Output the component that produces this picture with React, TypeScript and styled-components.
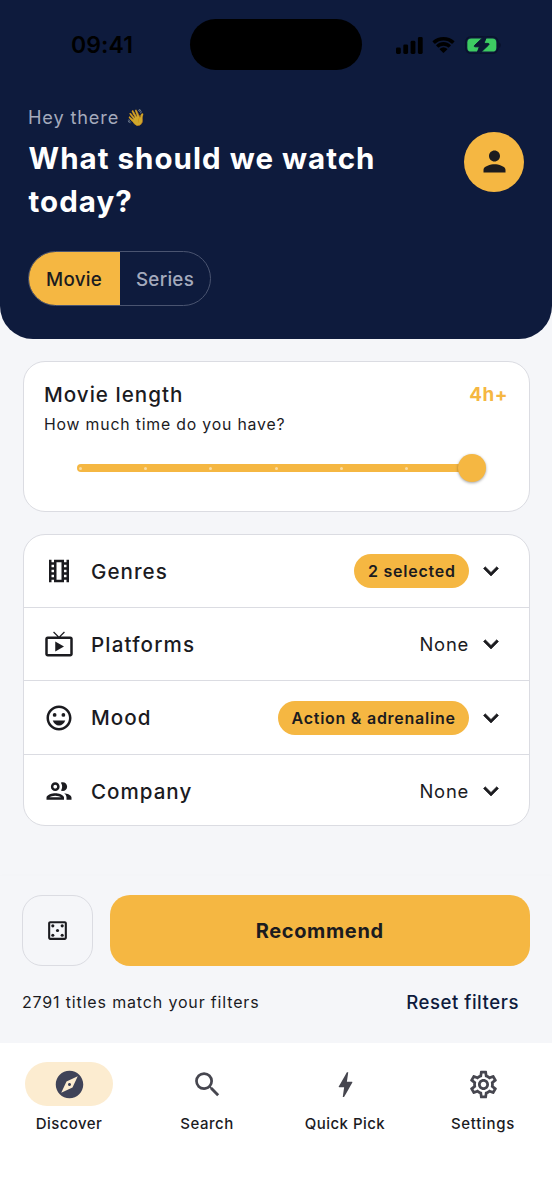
import React from 'react';
import styled, { createGlobalStyle } from 'styled-components';
import type { IconType } from 'react-icons';
import {
  MdBolt,
  MdExpandMore,
  MdExplore,
  MdLiveTv,
  MdOutlineCasino,
  MdOutlineEmojiEmotions,
  MdOutlineGroup,
  MdOutlineSettings,
  MdOutlineTheaters,
  MdPerson,
  MdSearch,
} from 'react-icons/md';

const navy = '#0e1b3d';
const amber = '#f5b742';
const ink = '#1b1b1f';
const line = '#dbdce2';
const canvas = '#f5f6f9';

const GlobalStyle = createGlobalStyle`
  *, *::before, *::after { box-sizing: border-box; }
  body { margin: 0; background: ${canvas}; }
  button { font: inherit; color: inherit; letter-spacing: inherit; padding: 0; border: 0; background: none; }
  svg { display: block; flex: none; }
`;

const Screen = styled.div`
  display: flex;
  flex-direction: column;
  height: 1200px;
  overflow: hidden;
  background: ${canvas};
  color: ${ink};
  font-family: Inter, 'Liberation Sans', sans-serif;
`;

const Header = styled.header`
  height: 339px;
  flex: none;
  background: ${navy};
  border-radius: 0 0 33px 33px;
`;

const StatusBar = styled.div`
  display: flex;
  align-items: center;
  height: 70px;
  padding: 19px 40px 0 71px;
`;

const Clock = styled.span`
  width: 119px;
  font-size: 23px;
  font-weight: 600;
  line-height: 28px;
  letter-spacing: 0.1px;
  color: #000;
`;

const Island = styled.div`
  width: 172px;
  height: 51px;
  flex: none;
  border-radius: 26px;
  background: #000;
`;

const StatusIcons = styled.div`
  display: flex;
  align-items: center;
  gap: 9.7px;
  margin-left: 33.5px;
  padding-top: 1px;
`;

const Intro = styled.div`
  display: flex;
  justify-content: space-between;
  padding: 35px 28px 0;
`;

const Greeting = styled.p`
  display: flex;
  margin: 0;
  font-size: 18.2px;
  line-height: 25px;
  letter-spacing: 0.84px;
  color: #a4aabc;
`;

const Wave = styled.span`
  margin-left: 7px;
  font-size: 16px;
  letter-spacing: 0;
  opacity: 0.8;
`;

const Heading = styled.h1`
  width: 380px;
  margin: 7px 0 0 0.5px;
  font-size: 29.5px;
  font-weight: 700;
  line-height: 42.7px;
  letter-spacing: 1.03px;
  color: #fff;
`;

const Avatar = styled.button`
  display: grid;
  place-items: center;
  width: 60px;
  height: 60px;
  margin-top: 26.5px;
  border-radius: 50%;
  background: ${amber};
  color: ${ink};
`;

const Segments = styled.div`
  display: inline-flex;
  width: 183px;
  height: 55px;
  margin: 29px 0 0 28px;
  border: 1px solid #4a5470;
  border-radius: 28px;
  overflow: hidden;
`;

const Segment = styled.button<{ $active?: boolean }>`
  width: ${(p) => (p.$active ? 91 : 90)}px;
  padding: 2px ${(p) => (p.$active ? 1 : 0)}px 0 0;
  font-size: 18.8px;
  font-weight: 450;
  letter-spacing: 0.25px;
  background: ${(p) => (p.$active ? amber : 'transparent')};
  color: ${(p) => (p.$active ? ink : '#a4aabc')};
`;

const Content = styled.main`
  display: flex;
  flex-direction: column;
  gap: 22px;
  height: 537px;
  flex: none;
  padding: 22px 22px 0 23px;
`;

const Card = styled.section`
  border: 1px solid ${line};
  border-radius: 22px;
  background: #fff;
`;

const LengthCard = styled(Card)`
  height: 151px;
  padding: 19px 21px 0 20px;
`;

const LengthTop = styled.div`
  display: flex;
  justify-content: space-between;
`;

const CardTitle = styled.h2`
  margin: 0;
  font-size: 20.6px;
  font-weight: 450;
  line-height: 28px;
  letter-spacing: 1px;
`;

const LengthValue = styled.span`
  font-size: 18.8px;
  font-weight: 700;
  line-height: 27px;
  letter-spacing: 0.5px;
  color: ${amber};
`;

const Hint = styled.p`
  margin: 5px 0 0;
  font-size: 15.8px;
  line-height: 22px;
  letter-spacing: 0.82px;
`;

const Slider = styled.div`
  display: flex;
  align-items: center;
  margin: 18px 0 0 33px;
`;

const Track = styled.div`
  display: flex;
  align-items: center;
  gap: 62.4px;
  width: 396px;
  height: 8px;
  padding-left: 1.5px;
  border-radius: 4px;
  background: ${amber};
`;

const Tick = styled.i`
  flex: none;
  width: 3px;
  height: 3px;
  border-radius: 50%;
  background: rgba(255, 255, 255, 0.5);
`;

const Thumb = styled.div`
  width: 28px;
  height: 28px;
  margin-left: -15px;
  border-radius: 50%;
  background: ${amber};
  box-shadow: 0 1px 3px rgba(0, 0, 0, 0.36);
`;

const FilterCard = styled(Card)`
  display: grid;
  grid-template-rows: 73px 73px 74px 70px;
  height: 292px;
`;

const FilterRow = styled.div`
  display: flex;
  align-items: center;
  padding: 0 23px 0 20px;
  border-bottom: 1px solid ${line};

  &:last-child { border-bottom: 0; padding-top: 2px; }
`;

const FilterName = styled.span<{ $spacing: number }>`
  flex: 1;
  margin-left: 17px;
  font-size: 20.6px;
  font-weight: 450;
  letter-spacing: ${(p) => p.$spacing}px;
`;

const Chip = styled.span`
  display: flex;
  align-items: center;
  height: 34px;
  padding: 0 13.4px 0 14px;
  border-radius: 17px;
  background: ${amber};
  font-size: 16px;
  font-weight: 600;
  letter-spacing: 0.74px;
`;

const Empty = styled.span`
  font-size: 18.4px;
  letter-spacing: 0.75px;
`;

const Chevron = styled(MdExpandMore)`
  margin-left: 7px;

  path:last-child { stroke: currentColor; stroke-width: 0.5px; }
`;

const Actions = styled.section`
  display: flex;
  flex-direction: column;
  height: 167px;
  flex: none;
  padding: 19px 22px 0 22px;
  background: ${canvas};
  box-shadow: 0 -1px 4px rgba(20, 30, 60, 0.012);
`;

const ActionRow = styled.div`
  display: flex;
  gap: 16.5px;
`;

const DiceButton = styled.button`
  display: grid;
  place-items: center;
  width: 71px;
  height: 71px;
  border: 1px solid ${line};
  border-radius: 20px;
`;

const Recommend = styled.button`
  flex: 1;
  height: 71px;
  border-radius: 20px;
  background: ${amber};
  font-size: 20px;
  font-weight: 700;
  letter-spacing: 0.62px;
`;

const Summary = styled.div`
  display: flex;
  justify-content: space-between;
  align-items: center;
  height: 24px;
  margin-top: 24px;
  padding-right: 11px;
`;

const MatchCount = styled.span`
  font-size: 16px;
  letter-spacing: 0.84px;
`;

const Reset = styled.button`
  font-size: 18.6px;
  font-weight: 500;
  letter-spacing: 0.53px;
  color: ${navy};
`;

const TabBar = styled.nav`
  display: grid;
  grid-template-columns: repeat(4, 1fr);
  flex: 1;
  padding-top: 19px;
  background: #fff;
`;

const Tab = styled.button<{ $spacing: number }>`
  display: flex;
  flex-direction: column;
  align-items: center;
  align-self: start;
  gap: 7.5px;
  font-size: 15px;
  font-weight: 500;
  line-height: 20px;
  letter-spacing: ${(p) => p.$spacing}px;
`;

const TabIcon = styled.span<{ $active?: boolean }>`
  display: grid;
  place-items: center;
  width: 88px;
  height: 44px;
  border-radius: 22px;
  background: ${(p) => (p.$active ? '#fcecd0' : 'transparent')};
  color: ${(p) => (p.$active ? '#3f4358' : '#46464f')};
`;

const SignalGlyph = () => (
  <svg width="27" height="17" viewBox="0 0 27 17">
    <rect x="0" y="10.6" width="4.8" height="6.4" rx="1.4" />
    <rect x="7.3" y="7.4" width="4.8" height="9.6" rx="1.4" />
    <rect x="14.6" y="3.8" width="4.8" height="13.2" rx="1.4" />
    <rect x="21.9" y="0" width="4.8" height="17" rx="1.4" />
  </svg>
);

const WifiGlyph = () => (
  <svg width="23" height="17" viewBox="0 0 23 17">
    <path d="M11.5 3.4c3.2 0 6.1 1.2 8.3 3.3.2.2.4.2.6 0l1.9-1.9c.2-.2.2-.5 0-.7C19.4 1.5 15.6 0 11.5 0S3.6 1.5.7 4.1c-.2.2-.2.5 0 .7l1.9 1.9c.2.2.4.2.6 0 2.2-2.1 5.1-3.3 8.3-3.3z" />
    <path d="M11.5 8.8c1.8 0 3.4.7 4.6 1.8.2.2.5.2.7 0l1.9-1.9c.2-.2.2-.5 0-.7-1.9-1.8-4.4-2.9-7.2-2.9S6.2 6.200 4.300 8c-.2.2-.2.5 0 .7l1.900 1.900c.2.2.5.2.7 0 1.200-1.100 2.800-1.800 4.600-1.800z" />
    <path d="M15.2 12.5c.2-.2.2-.5 0-.7a5.700 5.700 0 0 0-7.400 0c-.2.2-.2.5 0 .7l3.300 3.300c.2.2.5.2.7 0z" />
  </svg>
);

const BatteryGlyph = () => (
  <svg width="36" height="18.5" viewBox="0 0 37 19">
    <rect x="0.7" y="0.7" width="33.2" height="17.1" rx="5.5" fill="none" stroke="#09122b" strokeWidth="1.4" />
    <path d="M35.2 6.3c1 .5 1.6 1.6 1.6 3s-.6 2.5-1.6 3z" fill="#09122b" />
    <rect x="2.4" y="2.6" width="29.8" height="13.4" rx="4" fill="#3dcb62" />
    <path d="M19.6.4 9.9 9.6c-.7.8-.4 1.5.6 1.5h4.3l-2.9 7.5h2.5l9.9-9.4c.8-.8.5-1.6-.6-1.6h-4.2l2.800-7.200z" fill="#0b1634" stroke="#0b1634" strokeWidth="1" />
  </svg>
);

type Filter = { name: string; icon: IconType; value?: string; spacing: number };

const filters: Filter[] = [
  { name: 'Genres', icon: MdOutlineTheaters, value: '2 selected', spacing: 1.02 },
  { name: 'Platforms', icon: MdLiveTv, spacing: 1.15 },
  { name: 'Mood', icon: MdOutlineEmojiEmotions, value: 'Action & adrenaline', spacing: 1 },
  { name: 'Company', icon: MdOutlineGroup, spacing: 0.98 },
];

type TabItem = { label: string; icon: IconType; active?: boolean; spacing: number };

const tabs: TabItem[] = [
  { label: 'Discover', icon: MdExplore, active: true, spacing: 0.45 },
  { label: 'Search', icon: MdSearch, spacing: 0.55 },
  { label: 'Quick Pick', icon: MdBolt, spacing: 0.45 },
  { label: 'Settings', icon: MdOutlineSettings, spacing: 0.72 },
];

const ticks = [0, 1, 2, 3, 4, 5];

export default function App() {
  return (
    <Screen>
      <GlobalStyle />
      <Header>
        <StatusBar>
          <Clock>09:41</Clock>
          <Island />
          <StatusIcons>
            <SignalGlyph />
            <WifiGlyph />
            <BatteryGlyph />
          </StatusIcons>
        </StatusBar>
        <Intro>
          <div>
            <Greeting>
              Hey there <Wave>👋</Wave>
            </Greeting>
            <Heading>What should we watch today?</Heading>
          </div>
          <Avatar aria-label="Profile">
            <MdPerson size={33} />
          </Avatar>
        </Intro>
        <Segments>
          <Segment $active>Movie</Segment>
          <Segment>Series</Segment>
        </Segments>
      </Header>

      <Content>
        <LengthCard>
          <LengthTop>
            <CardTitle>Movie length</CardTitle>
            <LengthValue>4h+</LengthValue>
          </LengthTop>
          <Hint>How much time do you have?</Hint>
          <Slider>
            <Track>
              {ticks.map((tick) => (
                <Tick key={tick} />
              ))}
            </Track>
            <Thumb />
          </Slider>
        </LengthCard>

        <FilterCard>
          {filters.map(({ name, icon: Icon, value, spacing }) => (
            <FilterRow key={name}>
              <Icon size={30} />
              <FilterName $spacing={spacing}>{name}</FilterName>
              {value ? <Chip>{value}</Chip> : <Empty>None</Empty>}
              <Chevron size={30} />
            </FilterRow>
          ))}
        </FilterCard>
      </Content>

      <Actions>
        <ActionRow>
          <DiceButton aria-label="Random pick">
            <MdOutlineCasino size={25} />
          </DiceButton>
          <Recommend>Recommend</Recommend>
        </ActionRow>
        <Summary>
          <MatchCount>2791 titles match your filters</MatchCount>
          <Reset>Reset filters</Reset>
        </Summary>
      </Actions>

      <TabBar>
        {tabs.map(({ label, icon: Icon, active, spacing }) => (
          <Tab key={label} $spacing={spacing}>
            <TabIcon $active={active}>
              <Icon size={33} />
            </TabIcon>
            {label}
          </Tab>
        ))}
      </TabBar>
    </Screen>
  );
}
